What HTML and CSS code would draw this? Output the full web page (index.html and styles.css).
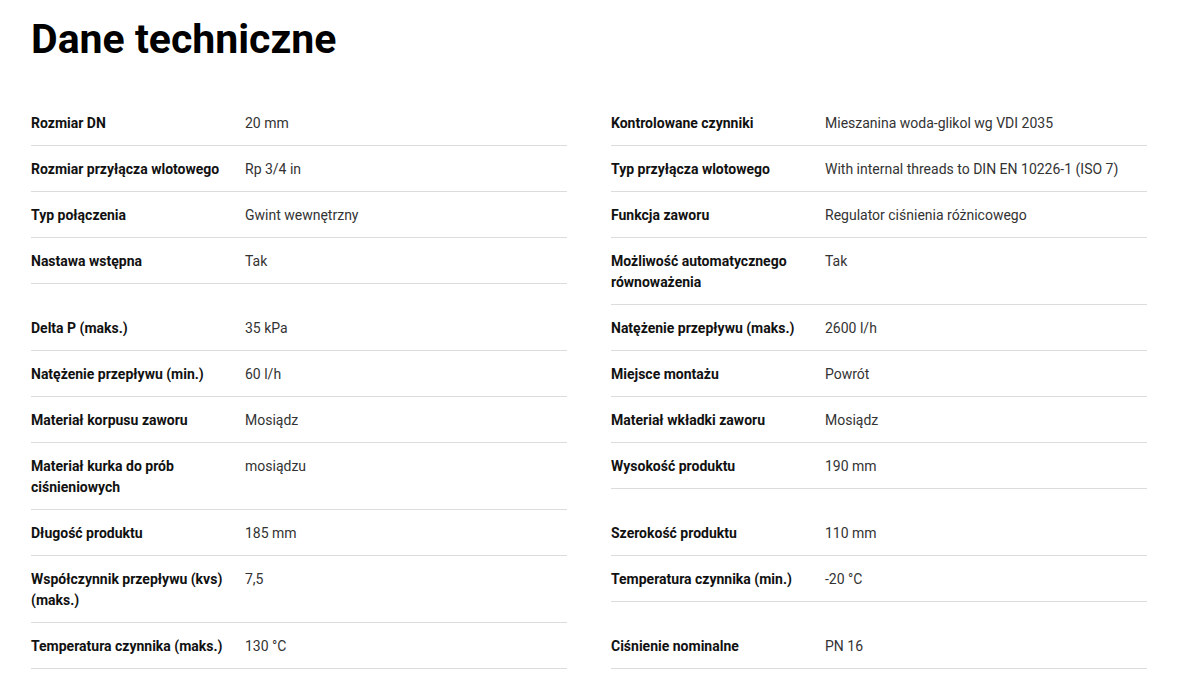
FILE: index.html
```html
<!DOCTYPE html>
<html lang="pl">
<head>
<meta charset="utf-8">
<title>Dane techniczne</title>
<link rel="stylesheet" href="styles.css">
</head>
<body>
<section class="specs">
  <h1 class="specs-title">Dane techniczne</h1>
  <div class="specs-grid">
    <div class="spec"><div class="spec-label">Rozmiar DN</div><div class="spec-value">20 mm</div></div>
    <div class="spec"><div class="spec-label">Kontrolowane czynniki</div><div class="spec-value">Mieszanina woda-glikol wg VDI 2035</div></div>
    <div class="spec"><div class="spec-label">Rozmiar przyłącza wlotowego</div><div class="spec-value">Rp 3/4 in</div></div>
    <div class="spec"><div class="spec-label">Typ przyłącza wlotowego</div><div class="spec-value">With internal threads to DIN EN 10226-1 (ISO 7)</div></div>
    <div class="spec"><div class="spec-label">Typ połączenia</div><div class="spec-value">Gwint wewnętrzny</div></div>
    <div class="spec"><div class="spec-label">Funkcja zaworu</div><div class="spec-value">Regulator ciśnienia różnicowego</div></div>
    <div class="spec"><div class="spec-label">Nastawa wstępna</div><div class="spec-value">Tak</div></div>
    <div class="spec"><div class="spec-label">Możliwość automatycznego równoważenia</div><div class="spec-value">Tak</div></div>
    <div class="spec"><div class="spec-label">Delta P (maks.)</div><div class="spec-value">35 kPa</div></div>
    <div class="spec"><div class="spec-label">Natężenie przepływu (maks.)</div><div class="spec-value">2600 l/h</div></div>
    <div class="spec"><div class="spec-label">Natężenie przepływu (min.)</div><div class="spec-value">60 l/h</div></div>
    <div class="spec"><div class="spec-label">Miejsce montażu</div><div class="spec-value">Powrót</div></div>
    <div class="spec"><div class="spec-label">Materiał korpusu zaworu</div><div class="spec-value">Mosiądz</div></div>
    <div class="spec"><div class="spec-label">Materiał wkładki zaworu</div><div class="spec-value">Mosiądz</div></div>
    <div class="spec"><div class="spec-label">Materiał kurka do prób ciśnieniowych</div><div class="spec-value">mosiądzu</div></div>
    <div class="spec"><div class="spec-label">Wysokość produktu</div><div class="spec-value">190 mm</div></div>
    <div class="spec"><div class="spec-label">Długość produktu</div><div class="spec-value">185 mm</div></div>
    <div class="spec"><div class="spec-label">Szerokość produktu</div><div class="spec-value">110 mm</div></div>
    <div class="spec"><div class="spec-label">Współczynnik przepływu (kvs) (maks.)</div><div class="spec-value">7,5</div></div>
    <div class="spec"><div class="spec-label">Temperatura czynnika (min.)</div><div class="spec-value">-20 °C</div></div>
    <div class="spec"><div class="spec-label">Temperatura czynnika (maks.)</div><div class="spec-value">130 °C</div></div>
    <div class="spec"><div class="spec-label">Ciśnienie nominalne</div><div class="spec-value">PN 16</div></div>
  </div>
</section>
</body>
</html>
```

FILE: styles.css
```css
* { box-sizing: border-box; }

html, body {
  margin: 0;
  padding: 0;
  background: #ffffff;
}

body {
  font-family: Roboto, "Liberation Sans", Arial, sans-serif;
  color: #333333;
}

.specs {
  padding: 15px 39px 0 31px;
}

.specs-title {
  margin: 0;
  font-size: 41px;
  line-height: 48px;
  font-weight: 700;
  color: #000000;
}

.specs-grid {
  margin-top: 37px;
  display: grid;
  grid-template-columns: 536px 536px;
  column-gap: 44px;
  align-items: start;
}

.spec {
  display: grid;
  grid-template-columns: 214px 1fr;
  padding: 13px 0 11px;
  border-bottom: 1px solid #dcdcdc;
  font-size: 14px;
  line-height: 21px;
}

.spec-label {
  font-weight: 700;
  color: #111111;
  padding-right: 16px;
}

.spec-value {
  font-weight: 400;
  color: #333333;
}
```
